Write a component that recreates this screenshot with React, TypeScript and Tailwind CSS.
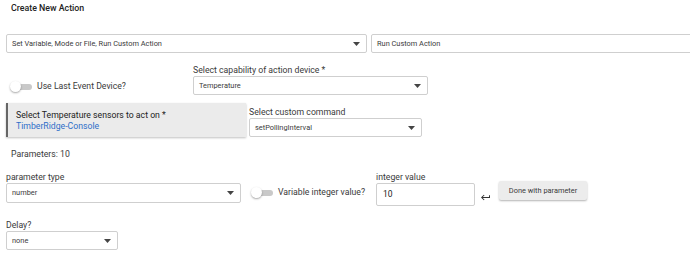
import React from "react";

function Caret() {
  return (
    <svg width="7" height="4" viewBox="0 0 7 4" className="shrink-0">
      <path d="M0 0h7L3.5 4z" fill="#444" />
    </svg>
  );
}

function Select({ value, className }: { value: string; className: string }) {
  return (
    <div
      className={
        "flex items-center justify-between border border-[#cfcfcf] rounded-[2px] bg-white pl-[5px] pr-[6px] text-[7.4px] text-[#3a3a3a] " +
        className
      }
    >
      <span>{value}</span>
      <Caret />
    </div>
  );
}

function Toggle() {
  return (
    <div className="relative w-[24px] h-[12px] shrink-0">
      <div className="absolute left-[7px] top-[3px] w-[16px] h-[6px] rounded-full bg-[#c9c9c9]" />
      <div className="absolute left-[1px] top-0 w-[11px] h-[11px] rounded-full bg-white shadow-[0_1px_2px_rgba(0,0,0,0.35)]" />
    </div>
  );
}

export default function App() {
  return (
    <div
      className="w-[690px] h-[261px] overflow-hidden bg-white text-[#222]"
      style={{ fontFamily: "Roboto, 'Liberation Sans', sans-serif" }}
    >
      <div className="pl-[11px] pt-[2px] text-[8.8px] font-medium leading-[13px] text-[#222]">
        Create New Action
      </div>

      <div className="flex gap-[4px] pl-[6px] mt-[19px]">
        <Select value="Set Variable, Mode or File, Run Custom Action" className="w-[361px] h-[19px] shrink-0" />
        <div className="w-[330px] h-[19px] shrink-0 border border-[#cfcfcf] rounded-[2px] pl-[5px] flex items-center text-[7.4px] text-[#3a3a3a]">
          Run Custom Action
        </div>
      </div>

      <div className="flex mt-[17px]">
        <div className="w-[193px] flex items-center gap-[4px] pl-[9px] pt-[9px]">
          <Toggle />
          <span className="text-[8.7px] text-[#3a3a3a]">Use Last Event Device?</span>
        </div>
        <div className="flex flex-col">
          <span className="text-[8.7px] leading-[12px] text-[#3a3a3a] -mt-[6px]">Select capability of action device *</span>
          <Select value="Temperature" className="w-[235px] h-[19px]" />
        </div>
      </div>

      <div className="flex mt-[8px] pl-[6px] gap-[3px]">
        <div className="w-[240px] h-[34px] bg-[#ebebeb] border-l-2 border-[#666] shadow-[0_1px_2px_rgba(0,0,0,0.25)] pl-[8px] pt-[7px] flex flex-col">
          <span className="text-[8.7px] leading-[11px] text-[#222]">Select Temperature sensors to act on *</span>
          <span className="text-[8.7px] leading-[11px] text-[#2f6fc9]">TimberRidge-Console</span>
        </div>
        <div className="flex flex-col pt-[3px]">
          <span className="text-[8.7px] leading-[12px] text-[#3a3a3a]">Select custom command</span>
          <Select value="setPollingInterval" className="w-[173px] h-[19px]" />
        </div>
      </div>

      <div className="pl-[11px] mt-[11px] text-[8.7px] leading-[12px] text-[#3a3a3a]">Parameters: 10</div>

      <div className="flex items-start pl-[6px] mt-[11px]">
        <div className="flex flex-col">
          <span className="text-[8.7px] leading-[12px] text-[#3a3a3a]">parameter type</span>
          <Select value="number" className="w-[235px] h-[20px]" />
        </div>
        <div className="flex items-center gap-[4px] ml-[9px] mt-[15px]">
          <Toggle />
          <span className="text-[8.7px] text-[#3a3a3a]">Variable integer value?</span>
        </div>
        <div className="flex flex-col ml-[11px]">
          <span className="text-[8.7px] leading-[12px] text-[#3a3a3a]">integer value</span>
          <div className="w-[99px] h-[23px] border border-[#cfcfcf] rounded-[2px] pl-[6px] flex items-center text-[8.5px] text-[#222]">
            10
          </div>
        </div>
        <svg width="9" height="7" viewBox="2 6 19 12" className="ml-[6px] mt-[23px]">
          <path d="M19 7v4H5.83l3.58-3.59L8 6l-6 6 6 6 1.41-1.41L5.83 13H21V7z" fill="#333" />
        </svg>
        <div className="ml-[9px] mt-[10px] w-[88px] h-[19px] bg-[#ececec] rounded-[2px] shadow-[0_1px_2px_rgba(0,0,0,0.3)] flex items-center justify-center text-[7.4px] text-[#3a3a3a]">
          Done with parameter
        </div>
      </div>

      <div className="flex flex-col pl-[6px] mt-[13px]">
        <span className="text-[8.7px] leading-[12px] text-[#3a3a3a]">Delay?</span>
        <Select value="none" className="w-[112px] h-[19px]" />
      </div>
    </div>
  );
}
